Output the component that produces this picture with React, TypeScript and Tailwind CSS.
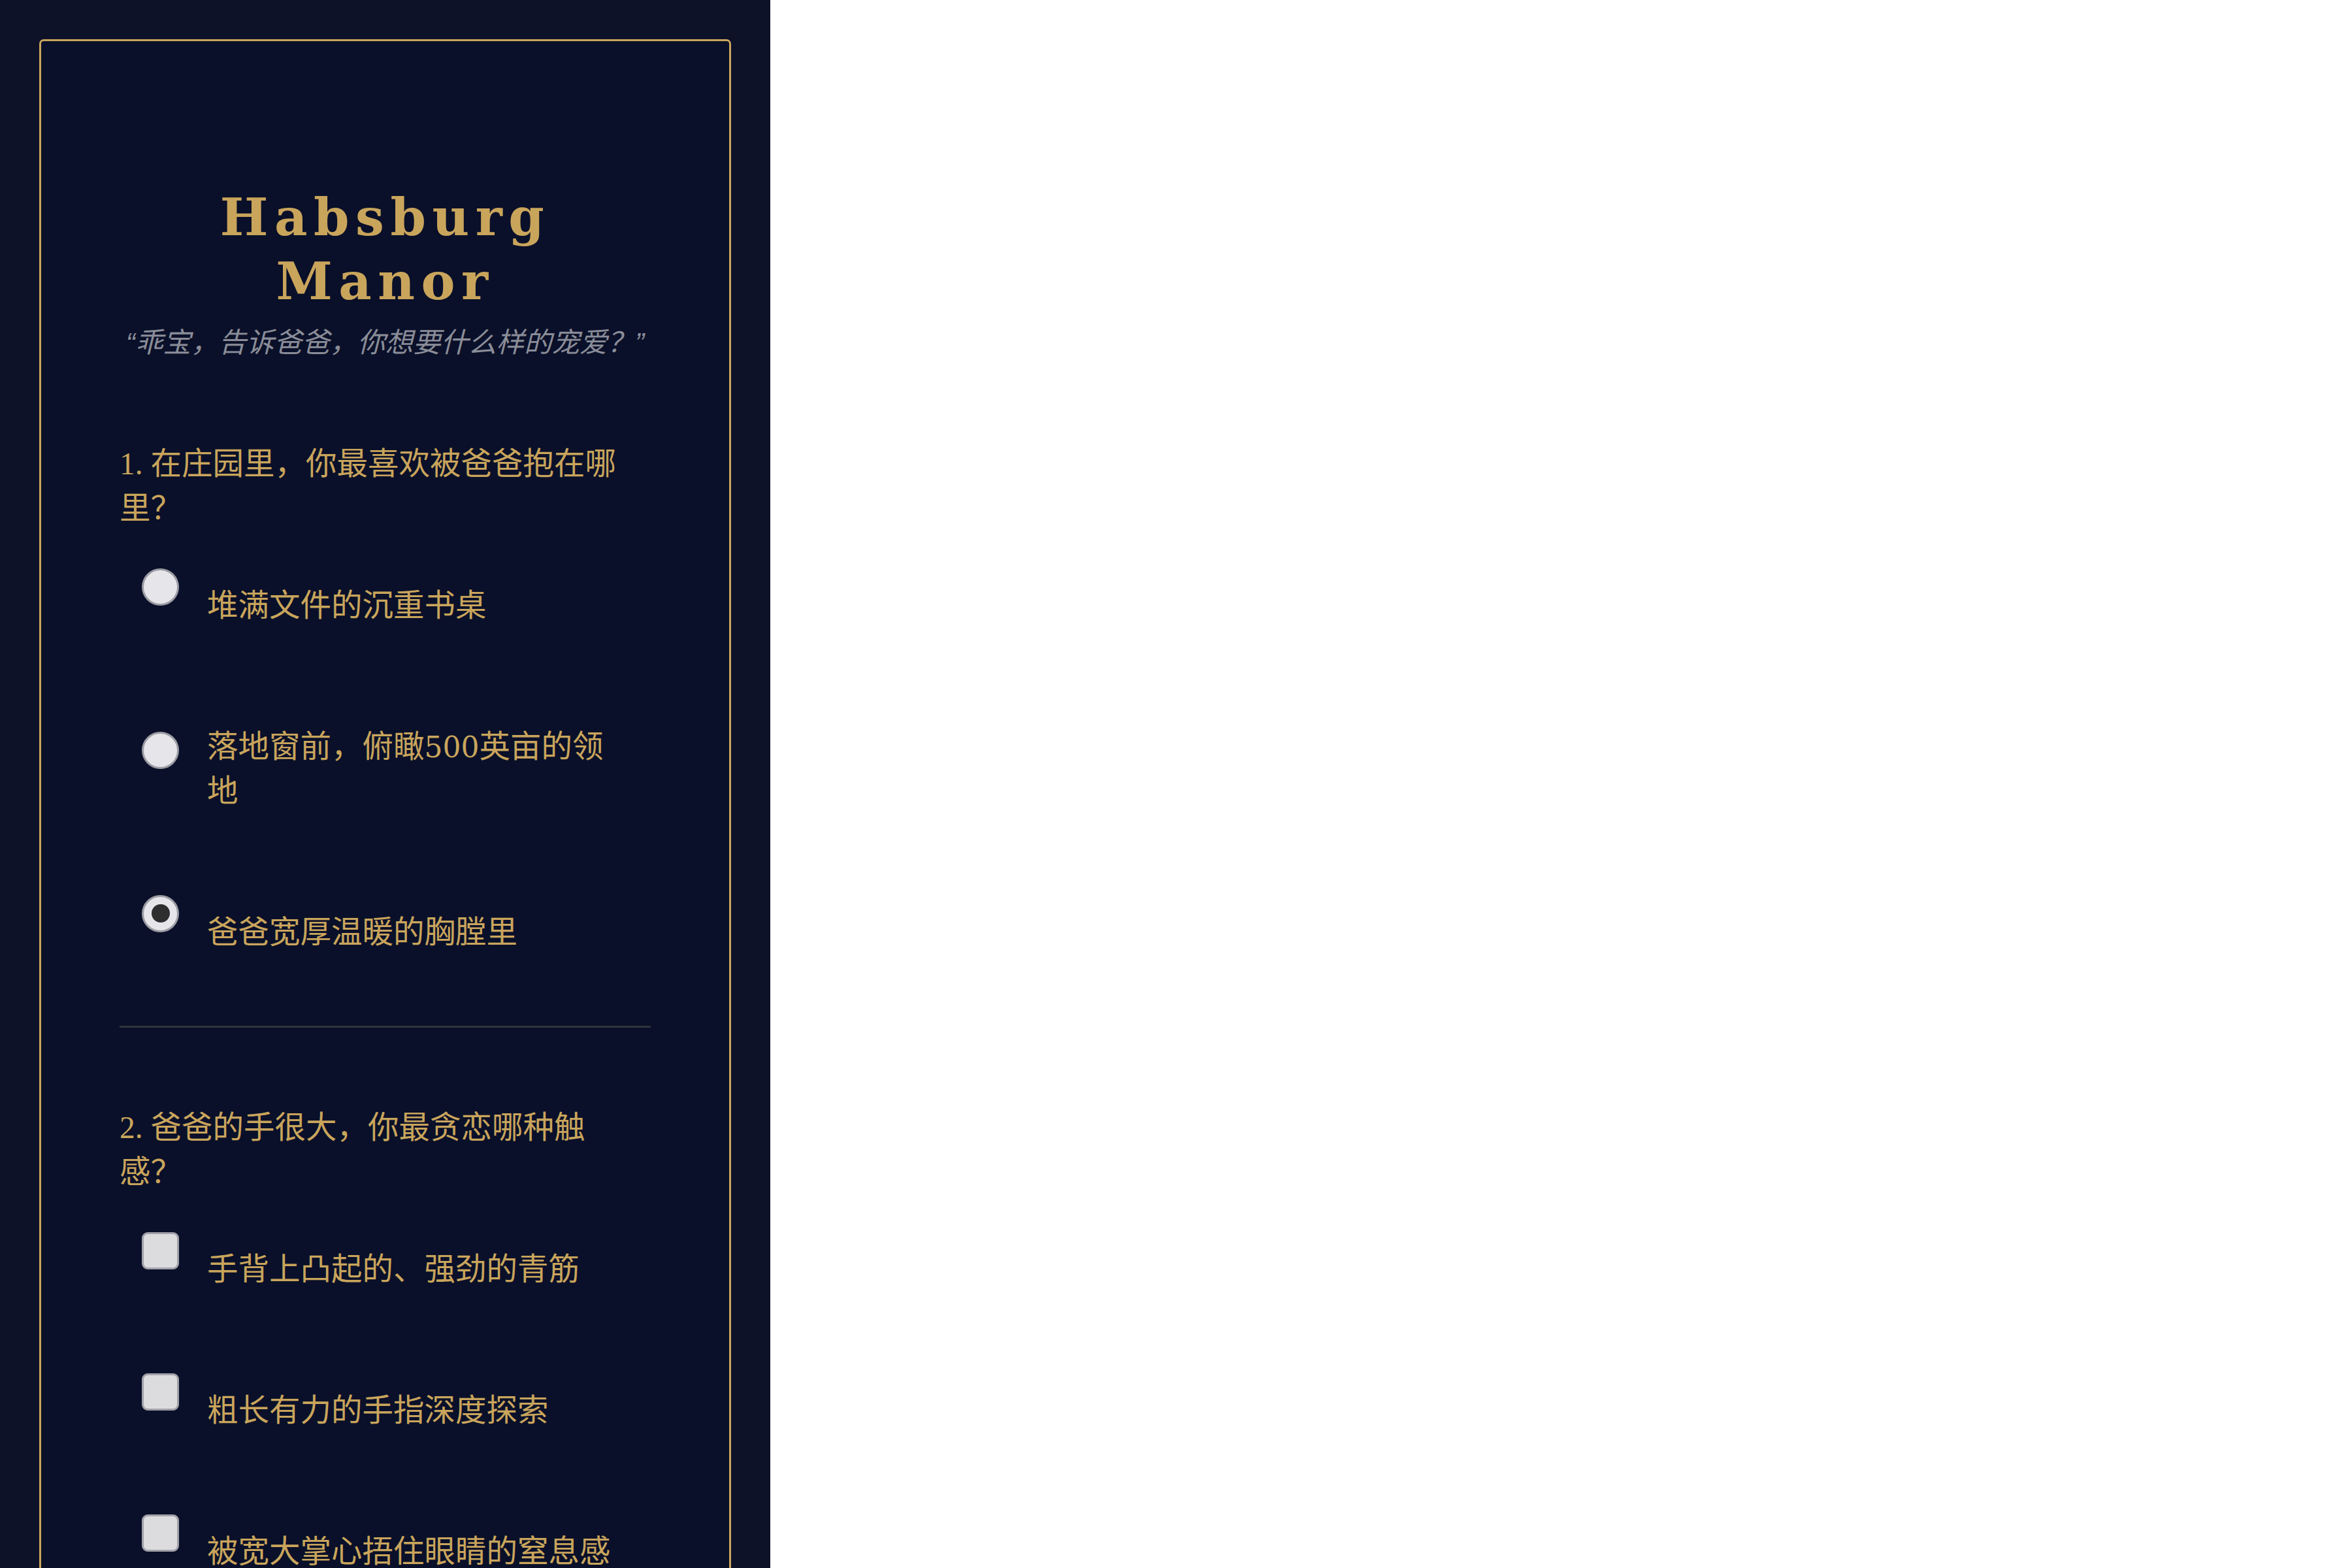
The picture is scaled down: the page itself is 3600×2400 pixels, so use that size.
import React from "react";

const GOLD = "text-[#c9a55c]";

function Radio({ checked }: { checked?: boolean }) {
  return (
    <div className="mb-[50px] flex h-[57px] w-[57px] shrink-0 items-center justify-center rounded-full border-[3px] border-[#9c9ca4] bg-[#e6e6ea]">
      {checked ? <div className="h-[28px] w-[28px] rounded-full bg-[#2e2e2e]" /> : null}
    </div>
  );
}

function Checkbox() {
  return (
    <div className="mb-[50px] h-[57px] w-[57px] shrink-0 rounded-[9px] border-[3px] border-[#a2a2aa] bg-[#dcdcdf]" />
  );
}

function Num({ children }: { children: React.ReactNode }) {
  return <span className="leading-none [font-family:'Liberation_Serif',serif]">{children}</span>;
}

function Digits({ children }: { children: React.ReactNode }) {
  return <span className="text-[44px] leading-none [font-family:'DejaVu_Serif',serif]">{children}</span>;
}

function Option({ control, children }: { control: React.ReactNode; children: React.ReactNode }) {
  return (
    <div className="flex items-center gap-[43px] pl-[34px] pr-[34px]">
      {control}
      <span className={`whitespace-nowrap py-[24px] text-[47.5px] leading-[68px] ${GOLD}`}>{children}</span>
    </div>
  );
}

export default function App() {
  return (
    <div className="min-h-screen bg-white">
      <div className="min-h-[2400px] w-[1179px] bg-[#0d1229] px-[60px] pt-[60px] pb-[60px] [font-family:'Noto_Sans_CJK_SC',sans-serif]">
        <div className="rounded-[7px] border-[3px] border-[#c9a55c] bg-[#0a1029] px-[120px] pt-[221px] pb-[200px]">
          <h1
            className={`text-center text-[78px] font-bold leading-[98px] tracking-[9.5px] ${GOLD} [font-family:'DejaVu_Serif',serif]`}
          >
            Habsburg Manor
          </h1>
          <p className="mt-[9px] text-center text-[42.5px] italic leading-[63px] text-[#8a8d98]">
            <span className="leading-none [font-family:'Liberation_Sans',sans-serif]">“</span>
            乖宝，告诉爸爸，你想要什么样的宠爱？
            <span className="leading-none [font-family:'Liberation_Sans',sans-serif]">”</span>
          </p>

          <section className="mt-[120px]">
            <div className={`whitespace-nowrap text-[47.5px] leading-[68px] ${GOLD}`}>
              <Num>1. </Num>在庄园里，你最喜欢被爸爸抱在哪
              <br />
              里？
            </div>
            <div className="mt-[57px] flex flex-col gap-[100px]">
              <Option control={<Radio />}>堆满文件的沉重书桌</Option>
              <Option control={<Radio />}>
                落地窗前，俯瞰<Digits>500</Digits>英亩的领
                <br />地
              </Option>
              <Option control={<Radio checked />}>爸爸宽厚温暖的胸膛里</Option>
            </div>
          </section>

          <div className="mt-[89px] h-[3px] bg-[#2f333d]" />

          <section className="mt-[115px]">
            <div className={`whitespace-nowrap text-[47.5px] leading-[68px] ${GOLD}`}>
              <Num>2. </Num>爸爸的手很大，你最贪恋哪种触
              <br />
              感？
            </div>
            <div className="mt-[57px] flex flex-col gap-[100px]">
              <Option control={<Checkbox />}>手背上凸起的、强劲的青筋</Option>
              <Option control={<Checkbox />}>粗长有力的手指深度探索</Option>
              <Option control={<Checkbox />}>被宽大掌心捂住眼睛的窒息感</Option>
            </div>
          </section>
        </div>
      </div>
    </div>
  );
}
